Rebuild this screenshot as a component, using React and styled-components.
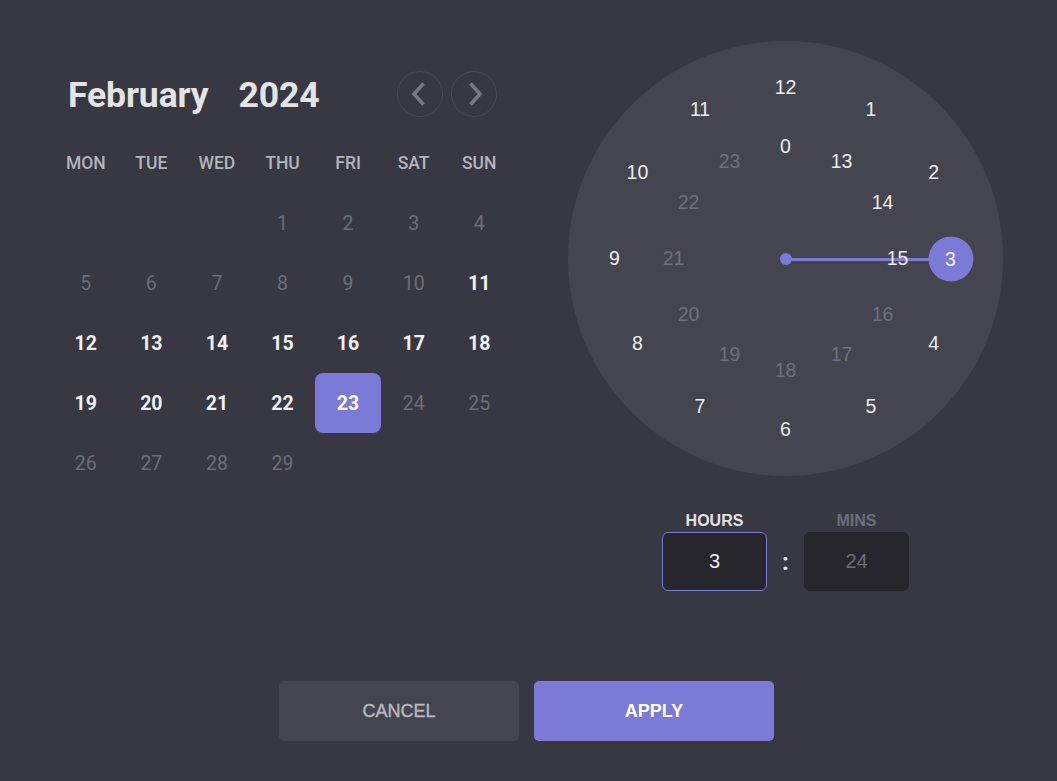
import React, { useState } from "react";
import styled, { createGlobalStyle } from "styled-components";

const GlobalStyle = createGlobalStyle`
    html, body {
        margin: 0;
        padding: 0;
        background: #383842;
    }
    body {
        width: 1057px;
        height: 781px;
        overflow: hidden;
        font-family: Roboto, "Liberation Sans", sans-serif;
    }
`

const ACCENT = "#7b7ad6";

const Page = styled.div`
    box-sizing: border-box;
    width: 1057px;
    height: 781px;
    padding: 41px 0 0 53px;
    background: #383842;
`

const TopRow = styled.div`
    display: flex;
    align-items: flex-start;
    gap: 56px;
`

const Calendar = styled.div`
    width: 459px;
    padding-top: 30px;
`

const Header = styled.div`
    display: flex;
    align-items: center;
    justify-content: space-between;
    height: 46px;
    padding: 0 15px;
`

const Title = styled.div`
    display: flex;
    gap: 30px;
    margin-top: 2px;
    font-family: Roboto, sans-serif;
    font-weight: 700;
    font-size: 35.5px;
    color: #e4e4e6;
    letter-spacing: -0.1px;
`

const Nav = styled.div`
    display: flex;
    gap: 8px;
`

const NavButton = styled.button`
    width: 46px;
    height: 46px;
    border-radius: 50%;
    border: 1px solid #4a4a55;
    background: transparent;
    display: flex;
    align-items: center;
    justify-content: center;
    padding: 0;
    cursor: pointer;
`

const Grid = styled.div`
    display: grid;
    grid-template-columns: repeat(7, 1fr);
    grid-auto-rows: 60px;
    margin-top: 16px;
`

const WeekDay = styled.div`
    display: flex;
    align-items: center;
    justify-content: center;
    font-size: 17.5px;
    font-weight: 500;
    color: #b4b4bb;
`

const Day = styled.div`
    display: flex;
    align-items: center;
    justify-content: center;
    border-radius: 8px;
    font-size: 19.5px;
    font-weight: ${p => (p.active ? 700 : 400)};
    color: ${p => (p.selected ? "#ffffff" : p.active ? "#f0f0f2" : "#6d6d77")};
    background: ${p => (p.selected ? ACCENT : "transparent")};
    cursor: ${p => (p.active ? "pointer" : "default")};
`

const ClockColumn = styled.div`
    display: flex;
    flex-direction: column;
    align-items: center;
    width: 435px;
`

const Face = styled.div`
    position: relative;
    width: 435px;
    height: 435px;
    border-radius: 50%;
    background: #45454f;
    font-family: "Liberation Sans", Arial, sans-serif;
`

const Num = styled.span`
    position: absolute;
    transform: translate(-50%, -50%);
    font-size: 19.5px;
    line-height: 1;
    color: ${p => (p.dim ? "#70707a" : "#ececee")};
    z-index: 2;
`

const Hand = styled.div`
    position: absolute;
    left: 217.5px;
    top: 216.5px;
    height: 3px;
    background: ${ACCENT};
    z-index: 1;
`

const Pivot = styled.div`
    position: absolute;
    left: 211.5px;
    top: 212px;
    width: 12px;
    height: 12px;
    border-radius: 50%;
    background: ${ACCENT};
`

const Knob = styled.div`
    position: absolute;
    width: 45px;
    height: 45px;
    border-radius: 50%;
    background: ${ACCENT};
    transform: translate(-50%, -50%);
    display: flex;
    align-items: center;
    justify-content: center;
    color: #f4f4f8;
    font-size: 19.5px;
    z-index: 3;
`

const TimeRow = styled.div`
    display: flex;
    align-items: flex-end;
    margin-top: 36px;
`

const Field = styled.div`
    display: flex;
    flex-direction: column;
    align-items: center;
    gap: 2px;
`

const FieldLabel = styled.div`
    font-family: "Liberation Sans", Arial, sans-serif;
    font-size: 16px;
    font-weight: 700;
    color: ${p => (p.active ? "#e2e2e6" : "#6d6d77")};
`

const FieldBox = styled.div`
    box-sizing: border-box;
    width: 105px;
    height: 59px;
    border-radius: 6px;
    background: #26262c;
    border: 1px solid ${p => (p.active ? ACCENT : "#26262c")};
    display: flex;
    align-items: center;
    justify-content: center;
    font-family: "Liberation Sans", Arial, sans-serif;
    font-size: 20px;
    color: ${p => (p.active ? "#ececee" : "#6d6d77")};
`

const Colon = styled.div`
    width: 37px;
    height: 59px;
    display: flex;
    align-items: center;
    justify-content: center;
    font-size: 24px;
    font-weight: 700;
    color: #e2e2e6;
`

const Footer = styled.div`
    display: flex;
    justify-content: center;
    gap: 15px;
    margin: 90px 0 0 -57px;
`

const Button = styled.button`
    width: 240px;
    height: 60px;
    border: none;
    border-radius: 5px;
    font-family: "Liberation Sans", Arial, sans-serif;
    font-size: 18px;
    font-weight: ${p => (p.primary ? 700 : 400)};
    -webkit-text-stroke: ${p => (p.primary ? "0" : "0.4px")};
    color: ${p => (p.primary ? "#ffffff" : "#b8b8be")};
    background: ${p => (p.primary ? ACCENT : "#45454f")};
    cursor: pointer;
`

const Chevron = ({ dir }) => (
    <svg width="24" height="24" viewBox="0 0 24 24">
        <path
            d={dir === "left" ? "M15.5 1.5 L6 12 L15.5 22.5" : "M8.5 1.5 L18 12 L8.5 22.5"}
            fill="none"
            stroke="#787882"
            strokeWidth="3.6"
        />
    </svg>
);

const WEEKDAYS = ["MON", "TUE", "WED", "THU", "FRI", "SAT", "SUN"];
const CENTER = 217.5;

function polar(i, r) {
    const a = (i * 30 * Math.PI) / 180;
    return { left: CENTER + r * Math.sin(a), top: CENTER - r * Math.cos(a) };
}

function Clock({ hour }) {
    const outer = [12, 1, 2, 3, 4, 5, 6, 7, 8, 9, 10, 11];
    const inner = [0, 13, 14, 15, 16, 17, 18, 19, 20, 21, 22, 23];
    const knob = polar(hour % 12, 165);

    return (
        <Face>
            {outer.map((n, i) =>
                n === hour ? null : (
                    <Num key={n} style={polar(i, 171)}>{n}</Num>
                )
            )}
            {inner.map((n, i) => (
                <Num key={n} dim={n >= 16} style={polar(i, 112)}>{n}</Num>
            ))}
            <Hand style={{ width: knob.left - CENTER - 20 }} />
            <Pivot />
            <Knob style={knob}>{hour}</Knob>
        </Face>
    );
}

export default function App() {
    const [selected, setSelected] = useState(23);
    // Feb 2024 starts on Thursday
    const blanks = 3;
    const days = Array.from({ length: 29 }, (_, i) => i + 1);

    return (
        <Page>
            <GlobalStyle />
            <TopRow>
                <Calendar>
                    <Header>
                        <Title>
                            <span>February</span>
                            <span>2024</span>
                        </Title>
                        <Nav>
                            <NavButton><Chevron dir="left" /></NavButton>
                            <NavButton><Chevron dir="right" /></NavButton>
                        </Nav>
                    </Header>
                    <Grid>
                        {WEEKDAYS.map(d => <WeekDay key={d}>{d}</WeekDay>)}
                        {Array.from({ length: blanks }, (_, i) => <div key={"b" + i} />)}
                        {days.map(d => {
                            const active = d >= 11 && d <= 23;
                            return (
                                <Day
                                    key={d}
                                    active={active}
                                    selected={d === selected}
                                    onClick={() => active && setSelected(d)}
                                >
                                    {d}
                                </Day>
                            );
                        })}
                    </Grid>
                </Calendar>
                <ClockColumn>
                    <Clock hour={3} />
                    <TimeRow>
                        <Field>
                            <FieldLabel active>HOURS</FieldLabel>
                            <FieldBox active>3</FieldBox>
                        </Field>
                        <Colon>:</Colon>
                        <Field>
                            <FieldLabel>MINS</FieldLabel>
                            <FieldBox>24</FieldBox>
                        </Field>
                    </TimeRow>
                </ClockColumn>
            </TopRow>
            <Footer>
                <Button>CANCEL</Button>
                <Button primary>APPLY</Button>
            </Footer>
        </Page>
    );
}
